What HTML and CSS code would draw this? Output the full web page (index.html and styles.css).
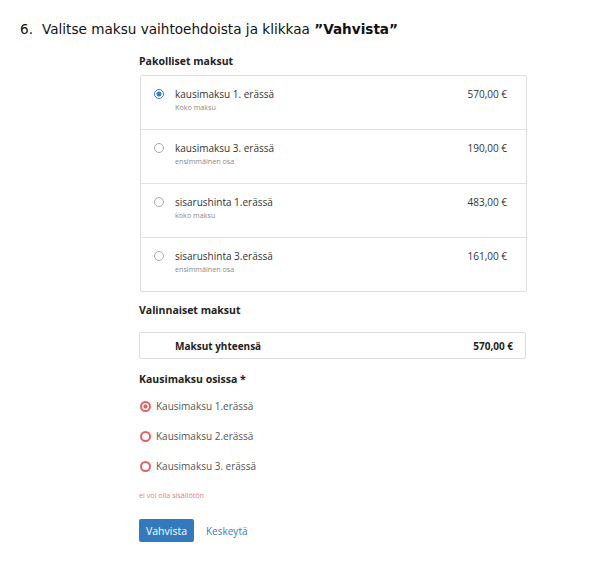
FILE: index.html
```html
<!DOCTYPE html>
<html lang="fi">
<head>
<meta charset="utf-8">
<link rel="stylesheet" href="styles.css">
</head>
<body>
<p class="step"><span class="num">6.</span>Valitse maksu vaihtoehdoista ja klikkaa <b>”Vahvista”</b></p>
<div class="form">
  <h3 class="h h-first">Pakolliset maksut</h3>
  <div class="card">
    <div class="row">
      <span class="radio checked"></span>
      <div class="info"><div class="name">kausimaksu 1. erässä</div><div class="sub">Koko maksu</div></div>
      <div class="price">570,00 €</div>
    </div>
    <div class="row">
      <span class="radio"></span>
      <div class="info"><div class="name">kausimaksu 3. erässä</div><div class="sub">ensimmäinen osa</div></div>
      <div class="price">190,00 €</div>
    </div>
    <div class="row">
      <span class="radio"></span>
      <div class="info"><div class="name">sisarushinta 1.erässä</div><div class="sub">koko maksu</div></div>
      <div class="price">483,00 €</div>
    </div>
    <div class="row">
      <span class="radio"></span>
      <div class="info"><div class="name">sisarushinta 3.erässä</div><div class="sub">ensimmäinen osa</div></div>
      <div class="price">161,00 €</div>
    </div>
  </div>
  <h3 class="h h-opt">Valinnaiset maksut</h3>
  <div class="total"><span>Maksut yhteensä</span><span>570,00 €</span></div>
  <h3 class="h h-parts">Kausimaksu osissa *</h3>
  <div class="opts">
    <div class="opt"><span class="rr checked"></span>Kausimaksu 1.erässä</div>
    <div class="opt"><span class="rr"></span>Kausimaksu 2.erässä</div>
    <div class="opt"><span class="rr"></span>Kausimaksu 3. erässä</div>
  </div>
  <div class="err">ei voi olla sisällötön</div>
  <div class="actions">
    <button class="btn">Vahvista</button>
    <a class="cancel">Keskeytä</a>
  </div>
</div>
</body>
</html>
```
FILE: styles.css
```css
html, body { margin: 0; padding: 0; background: #fff; }
body { width: 600px; height: 572px; overflow: hidden; }
.step {
  margin: 0;
  padding: 21px 0 0 20px;
  font-family: "DejaVu Sans", Verdana, sans-serif;
  font-size: 13.6px;
  line-height: 16px;
  color: #111;
}
.step .num { margin-right: 9px; }
.step b { font-weight: bold; }
.form {
  margin-left: 139px;
  width: 387px;
  font-family: "Open Sans", sans-serif;
  color: #333;
}
.h {
  margin: 0;
  font-size: 10.5px;
  font-weight: 700;
  color: #222;
  line-height: 14px;
}
.h-first { margin-top: 17px; }
.card {
  margin-top: 7px;
  border: 1px solid #ddd;
  border-radius: 2px;
  margin-left: 1px;
  width: 385px;
}
.row {
  display: flex;
  align-items: flex-start;
  height: 54px;
  padding: 0 19px 0 13px;
  box-sizing: border-box;
  border-top: 1px solid #e2e2e2;
}
.row:first-child { border-top: none; height: 53px; }
.radio {
  flex: none;
  width: 8px; height: 8px;
  border: 1.5px solid #aaa;
  border-radius: 50%;
  margin-top: 13px;
  box-sizing: content-box;
}
.radio.checked {
  border-color: #3b7bd0;
  background: radial-gradient(circle, #3b7bd0 0 2.2px, #fff 2.8px);
}
.info { flex: 1; margin-left: 11px; padding-top: 11px; }
.name { font-size: 10px; line-height: 14px; color: #333; }
.sub { font-size: 7.2px; line-height: 10px; color: #8a8a8a; margin-top: 1px; }
.price { padding-top: 11px; font-size: 10px; line-height: 14px; color: #333; }
.h-opt { margin-top: 11px; }
.total {
  margin-top: 15px;
  border: 1px solid #ddd;
  border-radius: 2px;
  height: 27px;
  box-sizing: border-box;
  display: flex;
  justify-content: space-between;
  align-items: center;
  padding: 0 12px 0 35px;
  font-size: 10px;
  font-weight: 700;
  color: #222;
}
.h-parts { margin-top: 13px; }
.opts { margin-top: 13px; display: flex; flex-direction: column; gap: 16px; }
.opt {
  display: flex;
  align-items: center;
  font-size: 10px;
  line-height: 14px;
  color: #555;
}
.rr {
  width: 7px; height: 7px;
  border: 2px solid #e06464;
  border-radius: 50%;
  margin-right: 5px;
  margin-left: 1px;
  box-sizing: content-box;
}
.rr.checked { background: radial-gradient(circle, #e06464 0 1.8px, #fff 2.4px); }
.err { margin-top: 17px; font-size: 7.2px; line-height: 10px; color: #e08080; }
.actions { margin-top: 19px; display: flex; align-items: center; gap: 12px; }
.btn {
  font-family: "Open Sans", sans-serif;
  font-size: 10.5px;
  color: #fff;
  background: #3379be;
  border: none;
  border-radius: 2px;
  height: 23px;
  width: 55px;
  padding: 0;
}
.cancel { font-size: 10px; color: #3b7bc0; }
```
